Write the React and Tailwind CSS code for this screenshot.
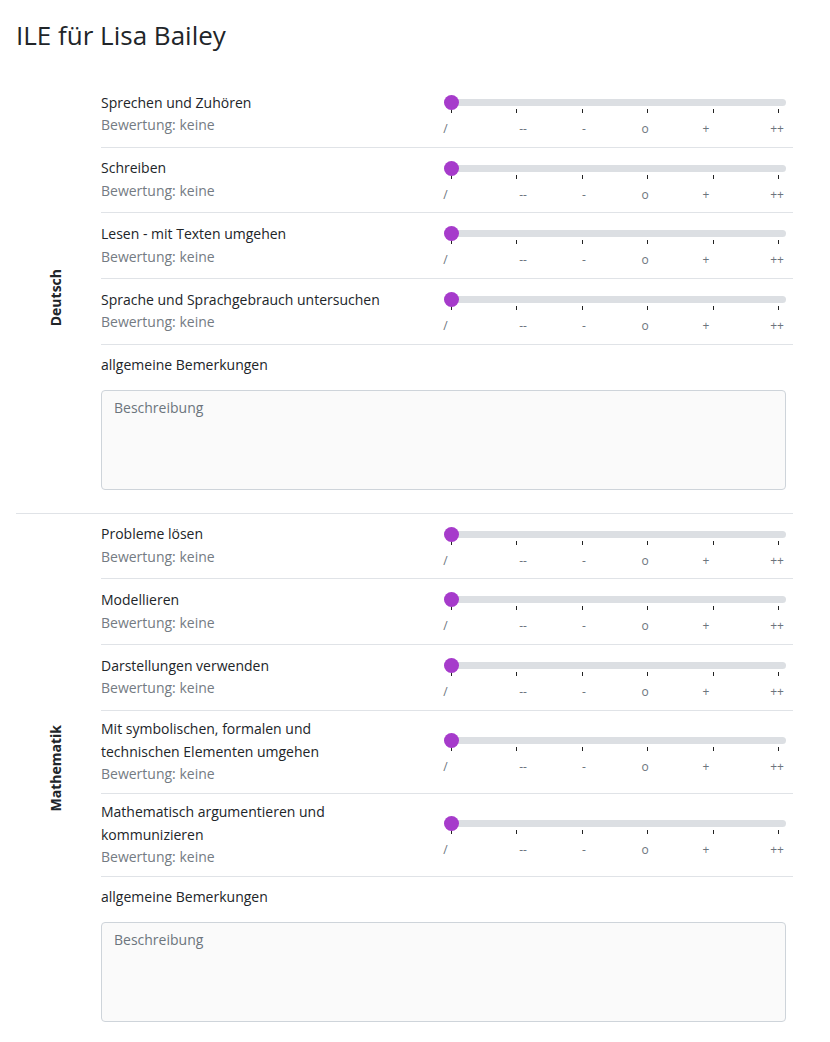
import React from "react";

const deutsch = [
  "Sprechen und Zuhören",
  "Schreiben",
  "Lesen - mit Texten umgehen",
  "Sprache und Sprachgebrauch untersuchen",
];

const mathe = [
  "Probleme lösen",
  "Modellieren",
  "Darstellungen verwenden",
  "Mit symbolischen, formalen und technischen Elementen umgehen",
  "Mathematisch argumentieren und kommunizieren",
];

const marks = [
  { t: "/", c: "left-[2px]" },
  { t: "--", c: "left-[79.5px]" },
  { t: "-", c: "left-[140.5px]" },
  { t: "o", c: "left-[201.5px]" },
  { t: "+", c: "left-[262.5px]" },
  { t: "++", c: "left-[333.5px]" },
];

function Slider() {
  return (
    <div className="relative h-[50.7px] w-1/2 shrink-0">
      <div className="relative mt-[10px] h-[7px] rounded-full bg-[#dcdfe3]">
        <div className="absolute left-0 top-[-4px] h-[15px] w-[15px] rounded-full bg-[#a63bcb]" />
      </div>
      <div className="mt-[3px] flex justify-between px-[7px]">
        {[0, 1, 2, 3, 4, 5].map((i) => (
          <div key={i} className="h-[4px] w-px bg-[#222]" />
        ))}
      </div>
      {marks.map((m) => (
        <span
          key={m.t}
          className={`absolute top-[32px] -translate-x-1/2 text-[12px] leading-4 text-[#6c757d] ${m.c}`}
        >
          {m.t}
        </span>
      ))}
    </div>
  );
}

function Row({ label }) {
  return (
    <div className="flex items-center border-b border-[#e0e3e7] py-[7px] pr-[7px]">
      <div className="w-1/2 pr-[55px] text-[14px] leading-[22.7px]">
        <div className="text-[#212529]">{label}</div>
        <div className="text-[#747b83]">Bewertung: keine</div>
      </div>
      <Slider />
    </div>
  );
}

function Section({ title, items, last }) {
  return (
    <div className={`flex ${last ? "border-t border-[#e0e3e7]" : ""}`}>
      <div className="flex w-[78px] shrink-0 items-center justify-center">
        <span className="rotate-180 text-[14px] font-bold text-[#212529] [writing-mode:vertical-rl]">
          {title}
        </span>
      </div>
      <div className={`ml-[7px] flex-1 ${last ? "" : "pb-[23px]"}`}>
        {items.map((it) => (
          <Row key={it} label={it} />
        ))}
        <div className="pr-[7px] pt-2">
          <div className="text-[14px] leading-[23px] text-[#212529]">allgemeine Bemerkungen</div>
          <textarea
            placeholder="Beschreibung"
            className="mt-[14px] block h-[100px] w-full resize-none rounded-[4px] border border-[#ced4da] bg-[#fafafa] px-3 py-[7px] text-[14px] leading-5 placeholder:text-[#6c757d] outline-none"
          />
        </div>
      </div>
    </div>
  );
}

export default function App() {
  return (
    <div className="bg-white px-4 font-['Open_Sans',sans-serif] text-[#212529]">
      <h1 className="pt-[18px] text-[26px] font-normal leading-[34px] text-[#212529]">
        ILE für Lisa Bailey
      </h1>
      <div className="mt-[30px] w-[777px]">
        <Section title="Deutsch" items={deutsch} />
        <Section title="Mathematik" items={mathe} last />
      </div>
    </div>
  );
}
